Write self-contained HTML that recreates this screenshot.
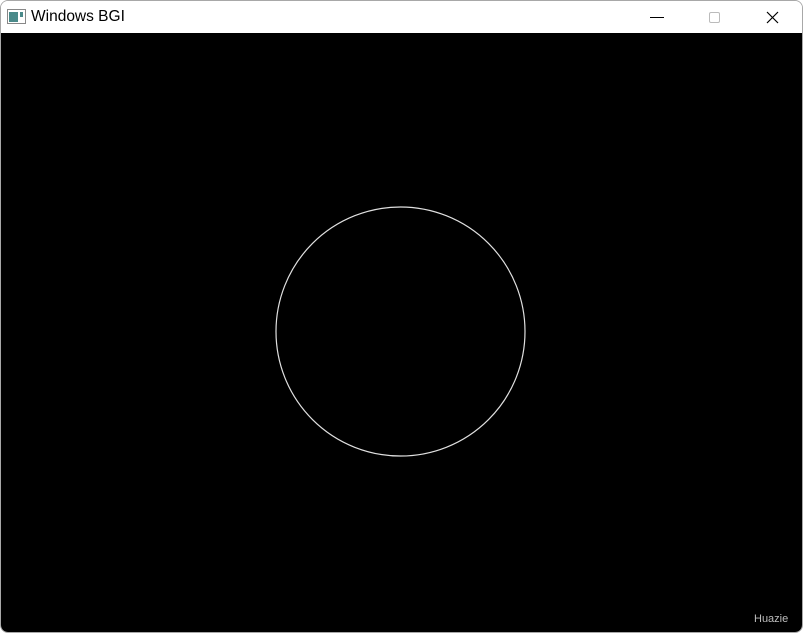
<!DOCTYPE html>
<html><head><style>
html,body{margin:0;padding:0;width:803px;height:633px;overflow:hidden;background:#fff}
.win{position:absolute;left:0;top:0;width:801px;height:631px;border:1px solid #a8a8a8;border-radius:8px;overflow:hidden;background:#fff}
.title{position:absolute;left:0;top:0;width:801px;height:32px;background:#fff}
.t{position:absolute;left:30px;top:7px;font:15.5px "Liberation Sans",sans-serif;color:#000}
.client{position:absolute;left:0;top:32px;width:801px;height:599px;background:#000}
.h{position:absolute;left:753px;top:612px;font:11px "Liberation Sans",sans-serif;color:#bdbdbd}
</style></head><body>
<div class="win">
<div class="title">
<svg style="position:absolute;left:6px;top:8px" width="20" height="16"><rect x="0.5" y="0.5" width="18" height="14" fill="#fff" stroke="#888"/><rect x="2" y="3" width="9" height="10" fill="#4a8a8a"/><rect x="13" y="3" width="3" height="5" fill="#4a8a8a"/></svg>
<div class="t">Windows BGI</div>
<svg style="position:absolute;left:640px;top:0" width="161" height="32">
<line x1="9" y1="16.5" x2="23" y2="16.5" stroke="#000" stroke-width="1"/>
<rect x="68.5" y="11.5" width="10" height="10" rx="1.5" fill="none" stroke="#bbb"/>
<path d="M126 11 L137 22 M137 11 L126 22" stroke="#000" stroke-width="1.2"/>
</svg>
</div>
<div class="client">
<svg width="801" height="599" style="position:absolute;left:0;top:0"><circle cx="399.5" cy="298.5" r="124.5" fill="none" stroke="#e0e0e0" stroke-width="1.2"/></svg>
</div>
<div class="h">Huazie</div>
</div>
</body></html>
